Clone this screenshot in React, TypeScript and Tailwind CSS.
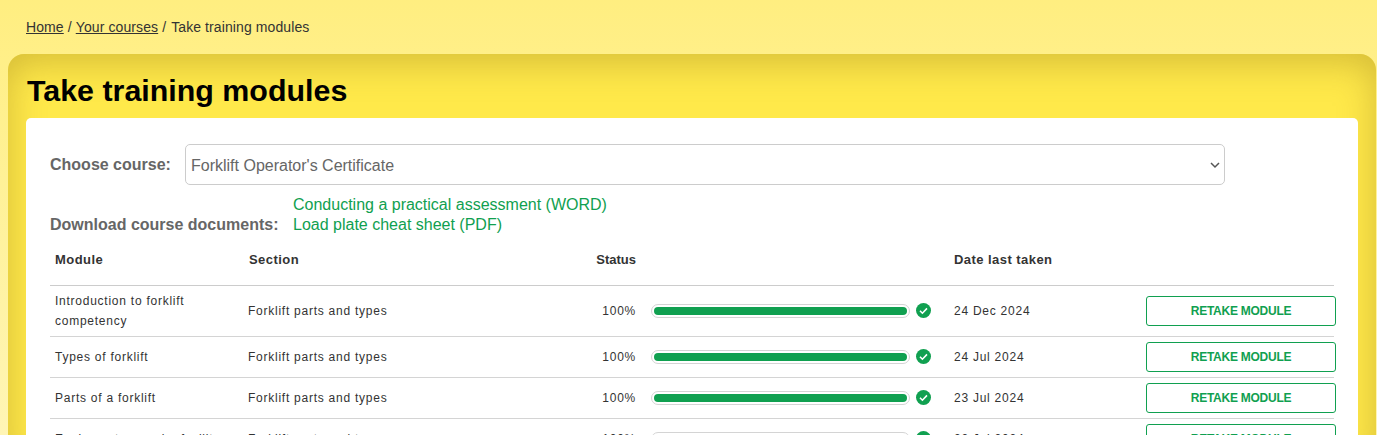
const rows = [
  { name: "Introduction to forklift competency", date: "24 Dec 2024", tall: true },
  { name: "Types of forklift", date: "24 Jul 2024" },
  { name: "Parts of a forklift", date: "23 Jul 2024" },
  { name: "Equipment around a facility", date: "22 Jul 2024" },
];

function StatusBar() {
  return (
    <div className="flex items-center">
      <div className="h-[14px] w-[259px] rounded-full border border-[#d4d4d4] p-[2px]">
        <div className="h-full w-full rounded-full bg-[#10a050]" />
      </div>
      <svg className="ml-[6px] h-[15px] w-[15px]" viewBox="0 0 15 15">
        <circle cx="7.5" cy="7.5" r="7.5" fill="#10a050" />
        <path d="M4 7.8l2.4 2.4L11 5.4" fill="none" stroke="#fff" strokeWidth="1.6" />
      </svg>
    </div>
  );
}

export default function App() {
  return (
    <div className="h-screen overflow-hidden bg-gradient-to-b from-[#ffee80] to-[#fff5b5] font-['Liberation_Sans',Arial,sans-serif]">
      {/* Breadcrumb */}
      <nav className="flex h-[54px] items-center gap-[4px] pl-[26px] text-sm tracking-[0.1px] text-[#333]">
        <a href="#" className="underline">Home</a>
        <span>/</span>
        <a href="#" className="underline">Your courses</a>
        <span>/</span>
        <span className="ml-px">Take training modules</span>
      </nav>

      <div className="ml-[8px] mr-[1px] rounded-t-[16px] bg-[#ffe94a] px-[18px] pt-[18px] shadow-[inset_0_8px_36px_rgba(160,130,30,0.45)]">
        <h1 className="mb-[9px] pl-[1px] text-[30.4px] font-bold leading-[37px] text-black">Take training modules</h1>

        <div className="rounded-t-[5px] bg-white px-[24px] pt-[26px]">
          <div className="flex items-center">
            <span className="w-[135px] font-bold text-[#666]">Choose course:</span>
            <div className="flex h-[41px] w-[1040px] items-center justify-between rounded-[5px] border border-[#ccc] pl-[5px] pr-[4px] text-[#666]">
              <span className="pt-[2px]">Forklift Operator's Certificate</span>
              <svg className="h-[8px] w-[10px]" viewBox="0 0 10 8">
                <path d="M1 2l4 4 4-4" fill="none" stroke="#555" strokeWidth="1.5" />
              </svg>
            </div>
          </div>

          <div className="mt-[10px] flex items-end">
            <span className="w-[243px] font-bold leading-[20px] text-[#666]">Download course documents:</span>
            <div className="flex flex-col leading-[20px] text-[#10a050]">
              <a href="#">Conducting a practical assessment (WORD)</a>
              <a href="#">Load plate cheat sheet (PDF)</a>
            </div>
          </div>

          <table className="w-[1284px] table-fixed border-collapse text-xs tracking-[0.75px] text-[#333]">
            <thead>
              <tr className="h-[50px] border-b border-[#ccc] text-left text-[13px] font-bold tracking-[0.45px]">
                <th className="w-[198px] pl-[5px]">Module</th>
                <th className="w-[318px] pl-px">Section</th>
                <th className="w-[70px] text-right tracking-normal">Status</th>
                <th className="w-[318px]" />
                <th className="w-[192px]">Date last taken</th>
                <th className="w-[188px]" />
              </tr>
            </thead>
            <tbody>
              {rows.map((row) => (
                <tr key={row.name} className={`border-b border-[#d4d4d4] ${row.tall ? "h-[51px]" : "h-[41px]"}`}>
                  <td className="pl-[5px] leading-[20px]">{row.name}</td>
                  <td>Forklift parts and types</td>
                  <td className="text-right">100%</td>
                  <td className="pl-[15px]">
                    <StatusBar />
                  </td>
                  <td>{row.date}</td>
                  <td>
                    <a href="#" className="flex h-[30px] w-[190px] items-center justify-center rounded-[3px] border border-[#10a050] font-bold tracking-[-0.25px] text-[#10a050]">
                      RETAKE MODULE
                    </a>
                  </td>
                </tr>
              ))}
            </tbody>
          </table>
        </div>
      </div>
    </div>
  );
}
